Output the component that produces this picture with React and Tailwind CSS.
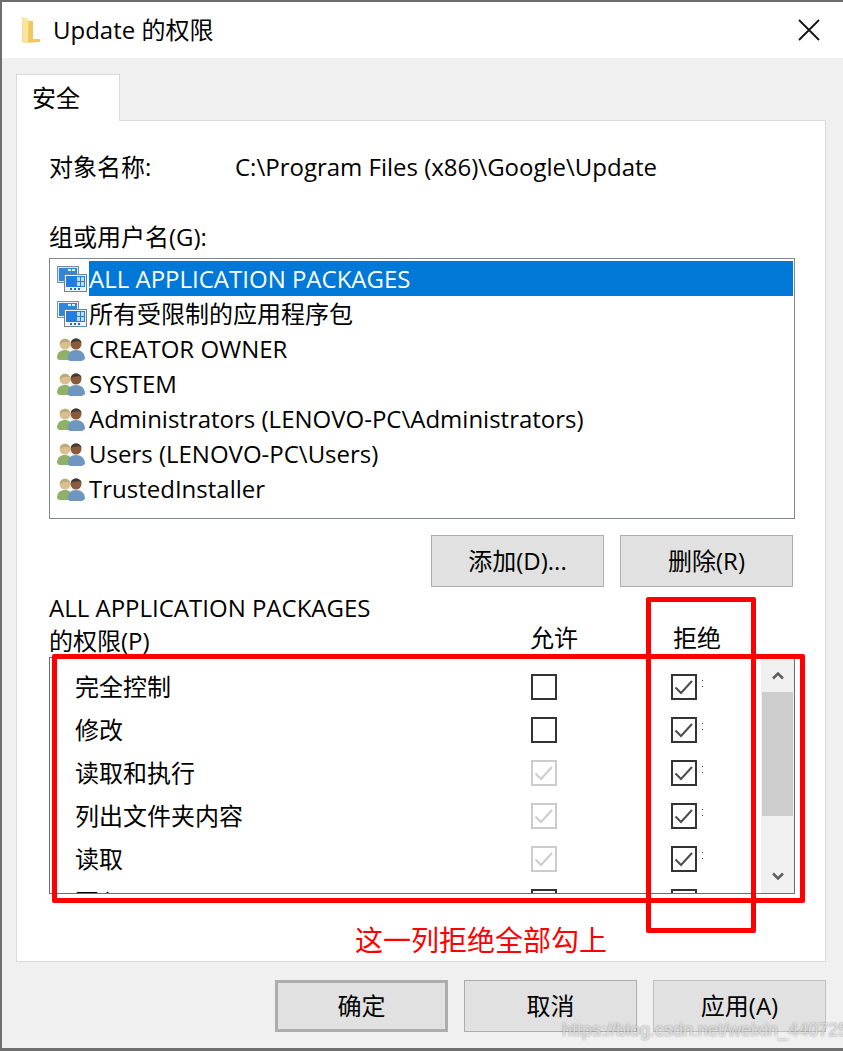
const font = { fontFamily: '"Open Sans", "Noto Sans CJK SC", sans-serif' }

const principals = [
  { name: 'ALL APPLICATION PACKAGES', icon: 'app', selected: true },
  { name: '所有受限制的应用程序包', icon: 'app' },
  { name: 'CREATOR OWNER', icon: 'users' },
  { name: 'SYSTEM', icon: 'users' },
  { name: 'Administrators (LENOVO-PC\\Administrators)', icon: 'users' },
  { name: 'Users (LENOVO-PC\\Users)', icon: 'users' },
  { name: 'TrustedInstaller', icon: 'users' },
]

const permissions = [
  { name: '完全控制', allow: 'off' },
  { name: '修改', allow: 'off' },
  { name: '读取和执行', allow: 'grey' },
  { name: '列出文件夹内容', allow: 'grey' },
  { name: '读取', allow: 'grey' },
  { name: '写入', allow: 'off' },
]

const FolderIcon = () => (
  <svg width="20" height="28" viewBox="0 0 20 28" className="shrink-0">
    <path d="M1 1 L8 4 L8 6 L12 6 L12 24 L19 24 L19 26 L5 27 L1 26 Z" fill="#f6d77f" />
    <path d="M8 5 L12 5 L12 23 L19 23 L19 26 L7 26 Z" fill="#f0c75e" />
    <path d="M1 1 L7 3 L7 27 L2 26 Z" fill="#fbe4a0" />
  </svg>
)

const CloseIcon = () => (
  <svg width="24" height="24" viewBox="0 0 24 24">
    <path d="M2 2 L22 22 M22 2 L2 22" stroke="#111" strokeWidth="1.8" fill="none" />
  </svg>
)

const AppIcon = ({ selected }) => (
  <svg width="30" height="26" viewBox="0 0 30 26" className="shrink-0">
    <rect x="0.5" y="0.5" width="21" height="16" fill={selected ? '#d5e6f7' : '#eef3f8'} stroke="#7a8ea3" />
    <rect x="2" y="2" width="18" height="13" fill="#2f86dd" />
    <rect x="11" y="3" width="3" height="2" fill="#dff0ff" />
    <rect x="15" y="3" width="3" height="2" fill="#dff0ff" />
    <rect x="7.5" y="8.5" width="22" height="17" fill="#eef3f8" stroke="#6f8296" />
    <rect x="9" y="10" width="19" height="11" fill="#1f7ee0" />
    <rect x="20" y="11" width="7" height="9" fill="#bcdcf8" />
    <path d="M23.5 11 V20 M20 15.5 H27" stroke="#1f7ee0" />
    <rect x="13" y="22" width="2" height="2" fill="#1f6fc0" />
    <rect x="17" y="22" width="2" height="2" fill="#1f6fc0" />
    <rect x="21" y="22" width="2" height="2" fill="#1f6fc0" />
  </svg>
)

const UsersIcon = () => (
  <svg width="29" height="24" viewBox="0 0 29 24" className="shrink-0">
    <path d="M0 21 C0 15 4 13 8 13 C12 13 15 15 15 21 L13 23 L2 23 Z" fill="#8fb168" />
    <circle cx="8" cy="7" r="5.5" fill="#d9c08e" />
    <path d="M3 7 C3 1 12 0 13 6 L11 5 L6 5 Z" fill="#b9ab77" />
    <path d="M11 23 C10 16 14 13 19 13 C24 13 28 16 28 22 L25 24 L13 24 Z" fill="#6d97c0" />
    <circle cx="19" cy="7" r="5.5" fill="#8a5a3c" />
    <path d="M14 6 C14 0 24 0 24.5 6 L22 4 L16 5 Z" fill="#3d3a36" />
  </svg>
)

const CheckBox = ({ mode }) => {
  const edge = mode === 'grey' ? '#cccccc' : '#333333'
  const tick = mode === 'grey' ? '#cccccc' : '#4d4d4d'
  return (
    <svg width="26" height="26" viewBox="0 0 26 26" className="block">
      <rect x="1" y="1" width="24" height="24" fill="#fff" stroke={edge} strokeWidth="2" />
      {mode !== 'off' && <path d="M4.5 13.5 L10 19 L21 7" stroke={tick} strokeWidth="2" fill="none" />}
    </svg>
  )
}

const Button = ({ children, className = '' }) => (
  <div className={`w-[173px] h-[52px] flex items-center justify-center bg-[#e1e1e1] border-[1.5px] border-[#adadad] text-[24px] text-black ${className}`}>
    {children}
  </div>
)

const Chevron = ({ down }) => (
  <svg width="12" height="9" viewBox="0 0 12 9">
    <path d={down ? 'M1 1.5 L6 6.5 L11 1.5' : 'M1 7.5 L6 2.5 L11 7.5'} stroke="#606060" strokeWidth="2.6" fill="none" />
  </svg>
)

const PermissionRow = ({ name, allow }) => (
  <div className="h-[43px] shrink-0 flex items-center">
    <div className="w-[481px] pl-[25px] text-[24px] leading-none text-black">{name}</div>
    <CheckBox mode={allow} />
    <div className="ml-[114px] relative">
      <CheckBox mode="check" />
      <div className="absolute left-[31px] top-[6px] w-px h-[7px] border-y border-[#444]" />
    </div>
  </div>
)

export default function App() {
  return (
    <div style={font} className="relative w-[843px] h-[1051px] overflow-hidden bg-[#f0f0f0] border-l-2 border-t-2 border-b-[3px] border-[#6e6e6e] text-black flex flex-col">
      {/* title bar */}
      <div className="h-[56px] shrink-0 bg-white flex items-center pl-[19px] pr-[22px]">
        <FolderIcon />
        <div className="ml-[12px] text-[24px] leading-none">Update 的权限</div>
        <div className="ml-auto flex"><CloseIcon /></div>
      </div>

      {/* tab */}
      <div className="pt-[16px] pl-[14px]">
        <div className="w-[104px] h-[47px] -mb-px relative z-10 bg-white border border-b-0 border-[#d9d9d9] pl-[15px] flex items-center text-[24px]">安全</div>
      </div>

      {/* page */}
      <div className="ml-[14px] w-[810px] h-[842px] shrink-0 bg-white border border-[#d9d9d9] pl-[32px] flex flex-col">
        <div className="mt-[27px] h-[38px] flex items-center text-[24px]">
          <div className="w-[186px]">对象名称:</div>
          <div>C:\Program Files (x86)\Google\Update</div>
        </div>

        <div className="mt-[32px] h-[38px] flex items-center text-[24px]">组或用户名(G):</div>

        <div className="mt-[2px] w-[746px] h-[261px] border border-[#828790] py-[2px] pl-[7px] pr-[1px] flex flex-col">
          {principals.map(p => (
            <div key={p.name} className="h-[35px] shrink-0 flex items-center">
              <div className="w-[32px] flex">
                {p.icon === 'app' ? <AppIcon selected={p.selected} /> : <UsersIcon />}
              </div>
              <div className={`flex-1 h-[35px] flex items-center text-[24px] leading-none ${p.selected ? 'bg-[#0078d7] text-white' : ''}`}>
                {p.name}
              </div>
            </div>
          ))}
        </div>

        <div className="mt-[16px] w-[744px] flex justify-end gap-[16px]">
          <Button>添加(D)...</Button>
          <Button>删除(R)</Button>
        </div>

        <div className="mt-[1px] w-[746px] h-[69px] flex text-[24px]">
          <div className="w-[481px] flex flex-col justify-end">
            <div className="h-[33px] leading-[33px]">ALL APPLICATION PACKAGES</div>
            <div className="h-[33px] leading-[33px]">的权限(P)</div>
          </div>
          <div className="w-[48px] flex items-end justify-center pb-[3px] leading-[33px]">允许</div>
          <div className="ml-[95px] w-[48px] flex items-end justify-center pb-[3px] leading-[33px]">拒绝</div>
        </div>

        <div className="w-[746px] h-[237px] border border-[#6e6e6e] flex overflow-hidden">
          <div className="flex-1 flex flex-col pt-[7px] overflow-hidden">
            {permissions.map(p => <PermissionRow key={p.name} name={p.name} allow={p.allow} />)}
          </div>
          <div className="w-[33px] flex flex-col bg-[#f0f0f0]">
            <div className="h-[34px] flex items-center justify-center"><Chevron /></div>
            <div className="h-[124px] mx-px bg-[#cdcdcd]" />
            <div className="flex-1 flex items-end justify-center pb-[12px]"><Chevron down /></div>
          </div>
        </div>

        <div className="mt-[32px] pl-[306px] text-[28px] leading-none text-[#ff0000]">这一列拒绝全部勾上</div>
      </div>

      {/* dialog buttons */}
      <div className="mt-[18px] pl-[273px] flex gap-[16px]">
        <Button className="border-[3px] border-[#0078d7]">确定</Button>
        <Button>取消</Button>
        <Button className="bg-[#cccccc] border-[#bfbfbf] text-[#7a7a7a]">应用(A)</Button>
      </div>

      {/* annotation boxes drawn over the dialog */}
      <div className="absolute left-[50px] top-[652px] w-[753px] h-[249px] border-[5px] border-[#ff0000] rounded-[2px] pointer-events-none" />
      <div className="absolute left-[644px] top-[595px] w-[110px] h-[336px] border-[5px] border-[#ff0000] rounded-[2px] pointer-events-none" />

      {/* blog watermark */}
      <div className="absolute left-[560px] top-[1019px] text-[18px] leading-none whitespace-nowrap text-white/60 [font-family:'Liberation_Sans',sans-serif] [text-shadow:0_0_2px_rgba(90,90,90,0.7)]">
        https://blog.csdn.net/weixin_44072535
      </div>
    </div>
  )
}
